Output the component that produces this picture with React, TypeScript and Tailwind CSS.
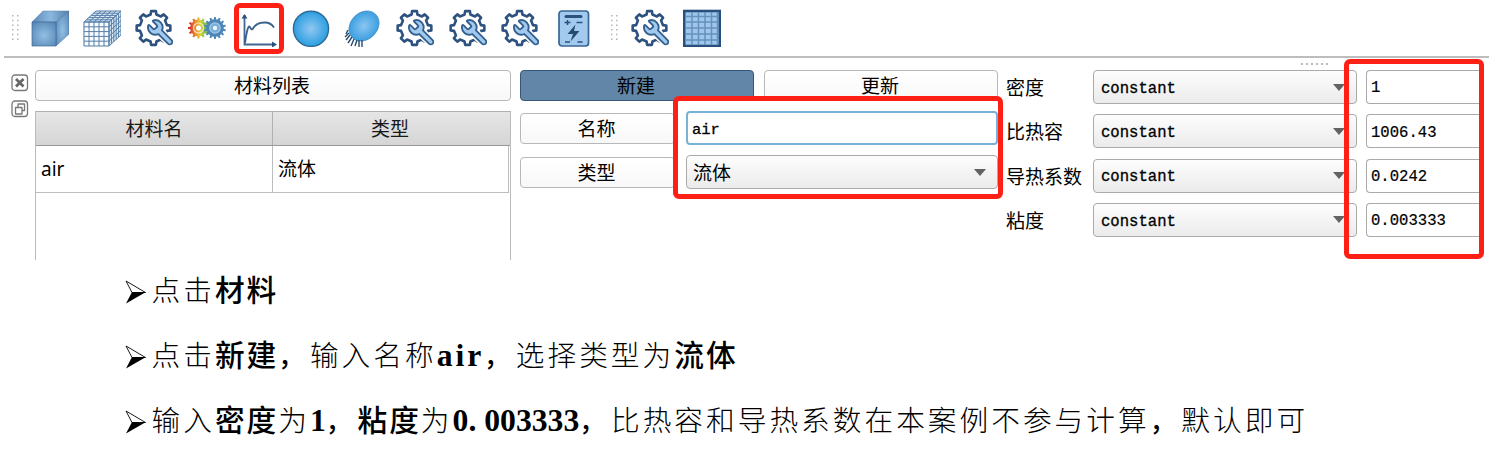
import type { ReactNode } from 'react';

const gearPoints = (cx: number, cy: number, outer: number, inner: number, teeth: number) => {
  const step = (Math.PI * 2) / teeth;
  const pts: string[] = [];
  for (let i = 0; i < teeth; i++) {
    const a = i * step - Math.PI / 2;
    const corners: [number, number][] = [
      [-0.27, inner],
      [-0.18, outer],
      [0.18, outer],
      [0.27, inner],
      [0.5, inner - 0.3],
    ];
    for (const [f, r] of corners) {
      pts.push(`${(cx + r * Math.cos(a + f * step)).toFixed(2)},${(cy + r * Math.sin(a + f * step)).toFixed(2)}`);
    }
  }
  return pts.join(' ');
};

const wrench =
  'M14.7 6.3a1 1 0 0 0 0 1.4l1.6 1.6a1 1 0 0 0 1.4 0l3.106-3.105c.32-.322.863-.22.983.218a6 6 0 0 1-8.259 7.057l-7.91 7.91a1 1 0 0 1-2.999-3l7.91-7.91a6 6 0 0 1 7.057-8.259c.438.12.54.662.219.984z';

function Svg({ children }: { children: ReactNode }) {
  return (
    <svg width="38" height="38" viewBox="0 0 38 38" fill="none" className="shrink-0">
      {children}
    </svg>
  );
}

function Slot({ children }: { children: ReactNode }) {
  return <div className="flex w-[52.2px] shrink-0 justify-center">{children}</div>;
}

function GearWrench() {
  return (
    <Svg>
      <polygon points={gearPoints(18.5, 19, 17, 13.8, 8)} stroke="#2d527f" strokeWidth="2.6" strokeLinejoin="round" />
      <path d={wrench} transform="translate(39.8 8.6) scale(-1.22 1.22)" stroke="#fff" strokeWidth="4" />
      <path
        d={wrench}
        transform="translate(39.8 8.6) scale(-1.22 1.22)"
        fill="#a2c9ee"
        stroke="#34608f"
        strokeWidth="1.5"
      />
    </Svg>
  );
}

function Cube() {
  return (
    <Svg>
      <defs>
        <radialGradient id="cf" cx=".5" cy=".55" r=".7">
          <stop stopColor="#92bfe4" />
          <stop offset="1" stopColor="#5484b2" />
        </radialGradient>
        <linearGradient id="ct">
          <stop stopColor="#5b8ab8" />
          <stop offset=".5" stopColor="#8cb8df" />
          <stop offset="1" stopColor="#527fac" />
        </linearGradient>
      </defs>
      <path d="M1 13 12 2h26L25 13z" fill="url(#ct)" stroke="#5681aa" strokeWidth=".5" />
      <path d="M25 13 38 2v23L25 37z" fill="url(#cf)" stroke="#426f9d" strokeWidth=".5" />
      <path d="M1 13h24v24H1z" fill="url(#cf)" stroke="#3f6c9b" strokeWidth=".7" />
    </Svg>
  );
}

function Mesh() {
  const t = [0, 1, 2, 3, 4, 5];
  return (
    <Svg>
      <g transform="translate(0 1)">
        <path d="M0 12 12 1h26v24L26 36H0z" fill="#dce9f4" />
        <path d="M1 12h25v24H1z" fill="#fafcff" />
        <g stroke="#547ea8" strokeWidth="1">
          {t.map((i) => (
            <path
              key={i}
              d={`M${1 + i * 5} 12V36M1 ${12 + i * 4.8}H26M${1 + i * 5} 12l12-11M26 ${12 + i * 4.8}l12-11M${1 + i * 2.4} ${12 - i * 2.2}h25M${26 + i * 2.4} ${12 - i * 2.2}v24`}
            />
          ))}
        </g>
      </g>
    </Svg>
  );
}

function ColourGears() {
  return (
    <Svg>
      <defs>
        <linearGradient id="rb">
          <stop stopColor="#cf1f2e" />
          <stop offset=".35" stopColor="#ef8a2a" />
          <stop offset=".6" stopColor="#d9d63c" />
          <stop offset="1" stopColor="#3aa35c" />
        </linearGradient>
      </defs>
      <polygon points={gearPoints(10.5, 19, 10.5, 8.5, 12)} fill="url(#rb)" />
      <circle cx="10.5" cy="19" r="5" stroke="#fff" strokeOpacity=".7" strokeWidth="1.2" />
      <circle cx="10.5" cy="19" r="2.5" fill="#fff" />
      <polygon points={gearPoints(27, 19, 11, 8.9, 14)} fill="#4a86b8" />
      <circle cx="27" cy="19" r="5.2" fill="#77add6" stroke="#aacbe3" strokeWidth="1.2" />
      <circle cx="27" cy="19" r="2.2" fill="#eaf4fa" />
    </Svg>
  );
}

function Chart() {
  return (
    <Svg>
      <path d="M4.5 6v29.5H33" stroke="#3f6793" strokeWidth="1.8" />
      <path d="M1.5 9.5 4.500 5l3 4.500zM32 32.500l5 3-5 3z" fill="#2d5078" />
      <path d="M5 34C6 27 7 19 9 17.500c1-1 2 5 4 2 2-4 7-6 12-6 4 0 7 2 9 5" stroke="#3a628c" strokeWidth="1.9" />
    </Svg>
  );
}

function Ball() {
  return (
    <Svg>
      <defs>
        <radialGradient id="bl">
          <stop stopColor="#92c7f2" />
          <stop offset="1" stopColor="#2a9fe0" />
        </radialGradient>
      </defs>
      <circle cx="19" cy="19.8" r="17.6" fill="url(#bl)" stroke="#316a96" strokeWidth="1.4" />
    </Svg>
  );
}

function Brush() {
  return (
    <Svg>
      <defs>
        <radialGradient id="br">
          <stop stopColor="#8cc5f3" />
          <stop offset="1" stopColor="#3b9fe0" />
        </radialGradient>
      </defs>
      <ellipse cx="20" cy="17" rx="16.5" ry="13.5" transform="rotate(-45 20 17)" fill="url(#br)" stroke="#4b90c0" strokeWidth=".7" />
      <path
        d="M4 21l-2 4M5 24l-4 4M6 26l-4 5M8 28l-4 6M10 30l-3 7M13 31l-2 6M15 31v7M18 31v7"
        stroke="#284b70"
        strokeWidth="1.4"
      />
    </Svg>
  );
}

function Battery() {
  return (
    <Svg>
      <rect x="6" y="2" width="29.5" height="35" rx="3" fill="#a2caee" stroke="#386594" strokeWidth="1.7" />
      <path d="M13 7.500h15" stroke="#2b527e" strokeWidth="3" strokeLinecap="round" />
      <path d="M11.5 13.500h6M14.500 11v5M23.500 13.500h6M12 33h5M24.500 33h5" stroke="#2b527e" strokeWidth="1.6" />
      <path d="m22.5 15.500-8 9.500h5.500L17.500 32.500l9-10.500h-5.500z" fill="#244973" />
    </Svg>
  );
}

function Grid() {
  return (
    <Svg>
      <rect x="1.2" y="2" width="35.6" height="35" fill="#9fc6ec" stroke="#28507e" strokeWidth="2.6" />
      <path
        d="M9 3v33M15.500 3v33M22 3v33M28.500 3v33M34.500 3v33M2 7.500h34M2 13h34M2 19h34M2 25h34M2 31h34"
        stroke="#6791bb"
        strokeWidth="1.5"
      />
    </Svg>
  );
}

function Grip() {
  return (
    <svg width="8" height="30" viewBox="0 0 8 30" className="shrink-0" fill="#b5b5b5">
      {[0, 1, 2, 3, 4, 5].map((i) => (
        <path key={i} d={`M0 ${2 + i * 4.7}h1.500v1.500h-1.500zM5 ${2 + i * 4.7}h1.500v1.500h-1.500z`} />
      ))}
    </svg>
  );
}

function Toolbar() {
  return (
    <div className="ml-1 flex h-[58px] items-start border-b-2 border-[#bdbdbd] pl-2 pt-[9px]">
      <div className="mr-1 mt-1 flex w-2">
        <Grip />
      </div>
      <Slot><Cube /></Slot>
      <Slot><Mesh /></Slot>
      <Slot><GearWrench /></Slot>
      <Slot><ColourGears /></Slot>
      <Slot><Chart /></Slot>
      <Slot><Ball /></Slot>
      <Slot><Brush /></Slot>
      <Slot><GearWrench /></Slot>
      <Slot><GearWrench /></Slot>
      <Slot><GearWrench /></Slot>
      <Slot><Battery /></Slot>
      <div className="ml-[13px] mr-[5px] mt-1 flex w-2">
        <Grip />
      </div>
      <Slot><GearWrench /></Slot>
      <Slot><Grid /></Slot>
    </div>
  );
}

function Button({ children, className }: { children: ReactNode; className: string }) {
  return (
    <div className={`flex shrink-0 items-center justify-center rounded-[4px] border pb-[2px] pr-[2px] ${className}`}>
      {children}
    </div>
  );
}

const plain = 'border-[#b8b8b8] bg-linear-to-b from-white to-[#f8f8f8]';

function Combo({ children, className }: { children: ReactNode; className: string }) {
  return (
    <div
      className={`flex h-[34px] shrink-0 items-center justify-between rounded-[4px] border border-[#aaaaaa] bg-linear-to-b from-[#fdfdfd] to-[#ebebeb] ${className}`}
    >
      {children}
      <svg width="12" height="7" viewBox="0 0 12 7" className="shrink-0">
        <path d="M0 0h12L6 7z" fill="#636363" />
      </svg>
    </div>
  );
}

function DockButtons() {
  return (
    <div className="mt-4 flex w-[18px] flex-col gap-[8px]">
      <svg width="18" height="18" viewBox="0 0 18 18" fill="none" stroke="#797979">
        <rect x="1" y="1" width="15.5" height="15.5" rx="3" strokeWidth="1.3" />
        <path d="m5 5 7.500 7.500M12.500 5 5 12.500" strokeWidth="2.8" stroke="#666" />
      </svg>
      <svg width="18" height="18" viewBox="0 0 18 18" fill="none" stroke="#797979">
        <rect x="1" y="1" width="15.5" height="15.5" rx="3" strokeWidth="1.3" />
        <path d="M7 7V4h6.500v6.500H11M4.500 7.500H11V14H4.500z" strokeWidth="1.3" strokeLinejoin="round" />
      </svg>
    </div>
  );
}

function MaterialList() {
  return (
    <div className="ml-[6px] mt-3 flex w-[476px] shrink-0 flex-col">
      <Button className={`h-[31px] ${plain}`}>材料列表</Button>
      <div className="mt-[10px] flex h-[149px] flex-col border-x border-t border-[#b0b0b0] border-x-[#bcbcbc]">
        <div className="flex h-[34px] shrink-0 border-b border-[#989898] bg-linear-to-b from-[#e6e6e6] to-[#d5d5d5] text-[#181818]">
          <div className="flex w-[237px] items-center justify-center border-r border-[#b0b0b0] pb-[2px]">材料名</div>
          <div className="flex flex-1 items-center justify-center pb-[2px] pr-[3px]">类型</div>
        </div>
        <div className="mr-px flex h-[47px] shrink-0 border-b border-r border-[#bdbdbd]">
          <div className="flex w-[237px] items-center border-r border-[#bdbdbd] pl-[5px] font-['Noto_Sans']">air</div>
          <div className="flex flex-1 items-center pb-[3px] pl-[5px]">流体</div>
        </div>
      </div>
    </div>
  );
}

function MaterialEditor() {
  return (
    <div className="ml-[9px] mt-3 flex w-[478px] shrink-0 flex-col">
      <div className="flex gap-[10px]">
        <Button className="h-[31px] w-[234px] border-[#38587b] bg-[#6286a7]">新建</Button>
        <Button className={`h-[31px] w-[234px] ${plain}`}>更新</Button>
      </div>
      <div className="mt-[10px] flex h-[34px] items-center justify-between">
        <Button className={`h-[31px] w-[155px] ${plain}`}>名称</Button>
        <div className="flex h-[34px] w-[312px] items-center rounded-[4px] border-2 border-[#78b2da] bg-white pl-1 pt-[5px] font-['Liberation_Mono'] text-[15.5px] [-webkit-text-stroke:0.3px_#000]">
          air
        </div>
      </div>
      <div className="mt-[10px] flex h-[34px] items-center justify-between">
        <Button className={`h-[31px] w-[155px] ${plain}`}>类型</Button>
        <Combo className="w-[312px] pl-[6px] pr-[11px]">
          <span className="pb-[2px]">流体</span>
        </Combo>
      </div>
    </div>
  );
}

const properties = [
  ['密度', '1'],
  ['比热容', '1006.43'],
  ['导热系数', '0.0242'],
  ['粘度', '0.003333'],
];

function Properties() {
  return (
    <div className="ml-2 mt-3 flex w-[473px] shrink-0 flex-col gap-[10.3px]">
      {properties.map(([label, value]) => (
        <div key={label} className="flex h-[34px] items-center">
          <div className="w-[87px] shrink-0 whitespace-nowrap pb-px">{label}</div>
          <Combo className="w-[264px] pl-[7px] pr-[11px] font-['Liberation_Mono'] text-[15.6px] [-webkit-text-stroke:0.3px_#000]">
            <span className="pt-[5px]">constant</span>
          </Combo>
          <div className="ml-[9px] flex h-[34px] flex-1 items-center rounded-l-[4px] border border-r-0 border-[#aaaaaa] pl-[4px] pt-[4px] font-['Liberation_Mono'] text-[15.6px] [-webkit-text-stroke:0.2px_#000]">
            {value}
          </div>
        </div>
      ))}
    </div>
  );
}

function Cjk({ children }: { children: string }) {
  return <span className="text-[28.7px] font-light tracking-[3px]">{children}</span>;
}

function Strong({ children }: { children: string }) {
  return <span className="text-[29.7px] font-medium tracking-[2px]">{children}</span>;
}

function Comma() {
  return <span className="text-[25.7px] font-medium tracking-[6px]">，</span>;
}

function Latin({ children, className = '' }: { children: string; className?: string }) {
  return <span className={`font-['Liberation_Serif'] text-[31.7px] font-bold ${className}`}>{children}</span>;
}

function Step({ children }: { children: ReactNode }) {
  return (
    <div className="flex h-[65px] items-center">
      <svg width="22" height="24" viewBox="0 0 22 24" className="mr-[4.5px] shrink-0">
        <path d="M1 1 20.500 12.500H7z" fill="#fff" stroke="#000" strokeWidth=".9" />
        <path d="M7 12h14L1 23.500z" />
      </svg>
      <div className="mb-[6px] flex h-8 items-baseline whitespace-nowrap leading-8">{children}</div>
    </div>
  );
}

export default function App() {
  return (
    <div className="relative h-[450px] w-[1489px] overflow-hidden bg-white font-['Noto_Sans_CJK_SC',sans-serif] text-[19px] leading-none text-black">
      <Toolbar />
      <div className="flex h-[202px] overflow-hidden pl-[11px]">
        <DockButtons />
        <MaterialList />
        <MaterialEditor />
        <Properties />
      </div>
      <div className="-mt-px pl-[125px]">
        <Step>
          <Cjk>点击</Cjk>
          <Strong>材料</Strong>
        </Step>
        <Step>
          <Cjk>点击</Cjk>
          <Strong>新建</Strong>
          <Comma />
          <Cjk>输入名称</Cjk>
          <Latin className="tracking-[2.9px]">air</Latin>
          <Comma />
          <Cjk>选择类型为</Cjk>
          <Strong>流体</Strong>
        </Step>
        <Step>
          <Cjk>输入</Cjk>
          <Strong>密度</Strong>
          <Cjk>为</Cjk>
          <Latin>1</Latin>
          <Comma />
          <Strong>粘度</Strong>
          <Cjk>为</Cjk>
          <Latin>0</Latin>
          <Latin className="tracking-[7.9px]">.</Latin>
          <Latin>003333</Latin>
          <Comma />
          <Cjk>比热容和导热系数在本案例不参与计算</Cjk>
          <Comma />
          <Cjk>默认即可</Cjk>
        </Step>
      </div>

      <svg width="28" height="2" viewBox="0 0 28 2" className="absolute left-[1301px] top-[63px]" fill="#bbb">
        <path d="M0 0h2v2H0zM5 0h2v2H5zM10 0h2v2h-2zM15 0h2v2h-2zM20 0h2v2h-2zM25 0h2v2h-2z" />
      </svg>
      <div className="absolute left-[234px] top-[3px] h-[51px] w-[50px] rounded-[6px] border-[5px] border-[#ff2015]" />
      <div className="absolute left-[673px] top-[96px] h-[103px] w-[330px] rounded-[6px] border-[5px] border-[#ff2015]" />
      <div className="absolute left-[1344px] top-[59px] h-[200px] w-[140px] rounded-[6px] border-[5px] border-[#ff2015]" />
    </div>
  );
}
